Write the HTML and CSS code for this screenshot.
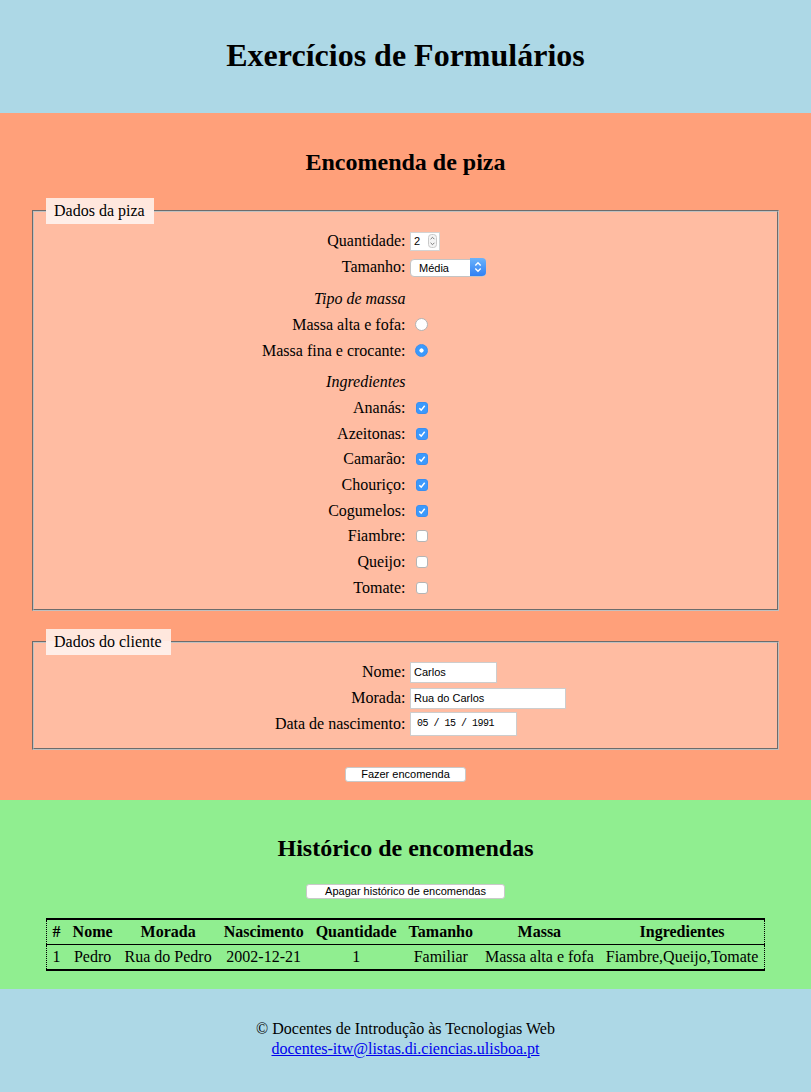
FILE: index.html
```html
<!DOCTYPE html>
<html lang="pt">
<head>
<meta charset="utf-8">
<title>Exercícios de Formulários</title>
<link rel="stylesheet" href="styles.css">
</head>
<body>
<header class="top">
  <h1 class="title">Exercícios de Formulários</h1>
</header>

<section class="order">
  <h2 class="sec-title">Encomenda de piza</h2>
  <form class="order-form">
    <fieldset class="box box-piza">
      <legend class="box-legend">Dados da piza</legend>
      <div class="row">
        <label class="lbl" for="qtd">Quantidade:</label>
        <div class="ctl">
          <span class="num-wrap">
            <input class="num" id="qtd" type="number" value="2">
            <svg class="spin" width="9" height="14" viewBox="0 0 9 14"><rect x="0.5" y="0.5" width="8" height="13" rx="3" fill="#f4f4f4" stroke="#c9c9c9"/><path d="M2.6 5.2 L4.5 3.3 L6.4 5.2" fill="none" stroke="#7a7a7a" stroke-width="1"/><path d="M2.6 8.8 L4.5 10.7 L6.4 8.8" fill="none" stroke="#7a7a7a" stroke-width="1"/></svg>
          </span>
        </div>
      </div>
      <div class="row">
        <label class="lbl" for="tam">Tamanho:</label>
        <div class="ctl">
          <span class="sel-wrap">
            <select class="sel" id="tam"><option>Pequena</option><option selected>Média</option><option>Familiar</option></select>
            <span class="sel-btn"><svg width="16" height="18" viewBox="0 0 16 18"><path d="M5.3 7.4 L8 4.8 L10.7 7.4" fill="none" stroke="#fff" stroke-width="1.4"/><path d="M5.3 10.6 L8 13.2 L10.7 10.6" fill="none" stroke="#fff" stroke-width="1.4"/></svg></span>
          </span>
        </div>
      </div>
      <div class="row head-row"><span class="lbl sub">Tipo de massa</span></div>
      <div class="row">
        <label class="lbl" for="m1">Massa alta e fofa:</label>
        <div class="ctl"><input class="radio" type="radio" name="massa" id="m1"></div>
      </div>
      <div class="row">
        <label class="lbl" for="m2">Massa fina e crocante:</label>
        <div class="ctl"><input class="radio" type="radio" name="massa" id="m2" checked></div>
      </div>
      <div class="row head-row head-ing"><span class="lbl sub">Ingredientes</span></div>
      <div class="row">
        <label class="lbl" for="i1">Ananás:</label>
        <div class="ctl"><input class="check" type="checkbox" id="i1" checked></div>
      </div>
      <div class="row">
        <label class="lbl" for="i2">Azeitonas:</label>
        <div class="ctl"><input class="check" type="checkbox" id="i2" checked></div>
      </div>
      <div class="row">
        <label class="lbl" for="i3">Camarão:</label>
        <div class="ctl"><input class="check" type="checkbox" id="i3" checked></div>
      </div>
      <div class="row">
        <label class="lbl" for="i4">Chouriço:</label>
        <div class="ctl"><input class="check" type="checkbox" id="i4" checked></div>
      </div>
      <div class="row">
        <label class="lbl" for="i5">Cogumelos:</label>
        <div class="ctl"><input class="check" type="checkbox" id="i5" checked></div>
      </div>
      <div class="row">
        <label class="lbl" for="i6">Fiambre:</label>
        <div class="ctl"><input class="check" type="checkbox" id="i6"></div>
      </div>
      <div class="row">
        <label class="lbl" for="i7">Queijo:</label>
        <div class="ctl"><input class="check" type="checkbox" id="i7"></div>
      </div>
      <div class="row">
        <label class="lbl" for="i8">Tomate:</label>
        <div class="ctl"><input class="check" type="checkbox" id="i8"></div>
      </div>
    </fieldset>

    <fieldset class="box box-cliente">
      <legend class="box-legend">Dados do cliente</legend>
      <div class="row">
        <label class="lbl" for="nome">Nome:</label>
        <div class="ctl"><input class="txt txt-nome" id="nome" type="text" value="Carlos"></div>
      </div>
      <div class="row">
        <label class="lbl" for="morada">Morada:</label>
        <div class="ctl"><input class="txt txt-morada" id="morada" type="text" value="Rua do Carlos"></div>
      </div>
      <div class="row">
        <label class="lbl" for="nasc">Data de nascimento:</label>
        <div class="ctl"><input class="txt txt-date" id="nasc" type="text" value="05 / 15 / 1991"></div>
      </div>
    </fieldset>

    <div class="btn-line"><button class="btn btn-order" type="button">Fazer encomenda</button></div>
  </form>
</section>

<section class="history">
  <h2 class="sec-title">Histórico de encomendas</h2>
  <div class="btn-line"><button class="btn btn-clear" type="button">Apagar histórico de encomendas</button></div>
  <table class="hist-table">
    <thead>
      <tr><th>#</th><th>Nome</th><th>Morada</th><th>Nascimento</th><th>Quantidade</th><th>Tamanho</th><th>Massa</th><th>Ingredientes</th></tr>
    </thead>
    <tbody>
      <tr><td>1</td><td>Pedro</td><td>Rua do Pedro</td><td>2002-12-21</td><td>1</td><td>Familiar</td><td>Massa alta e fofa</td><td>Fiambre,Queijo,Tomate</td></tr>
    </tbody>
  </table>
</section>

<footer class="foot">
  <div class="foot-line">© Docentes de Introdução às Tecnologias Web</div>
  <div class="foot-line"><a class="foot-link" href="mailto:docentes-itw@listas.di.ciencias.ulisboa.pt">docentes-itw@listas.di.ciencias.ulisboa.pt</a></div>
</footer>
</body>
</html>
```

FILE: styles.css
```css
html, body {
  margin: 0;
  padding: 0;
}
body {
  font-family: "Liberation Serif", "Times New Roman", serif;
  font-size: 16px;
  color: #000;
  background: #add8e6;
}

.top {
  background: #add8e6;
  padding: 37px 0 39px;
  text-align: center;
}
.title {
  margin: 0;
  font-size: 32px;
  font-weight: bold;
  line-height: 37px;
}

.order {
  background: #ffa07a;
  padding: 35px 30px 18px;
}
.sec-title {
  margin: 0 0 22px;
  font-size: 24px;
  font-weight: bold;
  line-height: 28px;
  text-align: center;
}

.order-form {
  margin: 0;
}

.box {
  margin: 0 2px 18px;
  padding: 4px 12px 8px;
  border: 2px groove #c0c0c0;
  background: rgba(255, 255, 255, 0.3);
}
.box-cliente {
  margin-bottom: 17px;
  padding-top: 5px;
  padding-bottom: 11px;
}
.box-legend {
  background: rgba(255, 255, 255, 0.75);
  padding: 4px 9px 4px 8px;
  line-height: 18px;
}

.row {
  display: grid;
  grid-template-columns: 1fr 1fr;
  align-items: center;
  height: 25.7px;
}
.head-row {
  margin-top: 7px;
}
.head-ing {
  margin-top: 6px;
}
.lbl {
  text-align: right;
}
.sub {
  font-style: italic;
}
.ctl {
  display: flex;
  align-items: center;
  padding-left: 4.5px;
}

.num-wrap, .sel-wrap {
  position: relative;
  display: inline-block;
  height: 19px;
}
.num {
  box-sizing: border-box;
  width: 30px;
  height: 19px;
  margin: 0;
  padding: 0 0 0 3px;
  border: 1px solid #d3d3d3;
  background: #fff;
  font-family: "Liberation Sans", Arial, sans-serif;
  font-size: 11px;
  -moz-appearance: textfield;
}
.num::-webkit-inner-spin-button,
.num::-webkit-outer-spin-button {
  -webkit-appearance: none;
  margin: 0;
}
.spin {
  position: absolute;
  right: 3px;
  top: 2.5px;
}

.sel-wrap {
  height: 18px;
}
.sel {
  -webkit-appearance: none;
  appearance: none;
  box-sizing: border-box;
  width: 76px;
  height: 18px;
  margin: 0;
  padding: 0 0 0 8px;
  border: 1px solid #c4c4c4;
  border-radius: 4px;
  background: #fff;
  font-family: "Liberation Sans", Arial, sans-serif;
  font-size: 11px;
  color: #000;
}
.sel-btn {
  position: absolute;
  right: 0;
  top: 0;
  width: 16px;
  height: 18px;
  border-radius: 0 4px 4px 0;
  background: linear-gradient(#6cb3fa, #2f80f5);
  pointer-events: none;
}
.sel-btn svg {
  display: block;
}

.radio {
  -webkit-appearance: none;
  appearance: none;
  box-sizing: border-box;
  width: 13px;
  height: 13px;
  margin: 0 0 0 5px;
  border: 1px solid #b3b3b3;
  border-radius: 50%;
  background: #fff;
}
.radio:checked {
  border-color: #3a8ff0;
  background: radial-gradient(circle, #fff 0 1.8px, #3b99fc 2.4px);
}

.check {
  -webkit-appearance: none;
  appearance: none;
  box-sizing: border-box;
  width: 12px;
  height: 12px;
  margin: 0 0 0 5.5px;
  border: 1px solid #b5b5b5;
  border-radius: 3px;
  background: #fff;
}
.check:checked {
  border-color: #3a8ff0;
  background: #3b99fc url("data:image/svg+xml,%3Csvg xmlns='http://www.w3.org/2000/svg' width='10' height='10' viewBox='0 0 10 10'%3E%3Cpath d='M2.3 5.2 L4.2 7.1 L7.7 2.8' fill='none' stroke='white' stroke-width='1.5'/%3E%3C/svg%3E") center/10px 10px no-repeat;
}

.txt {
  box-sizing: border-box;
  height: 21px;
  margin: 0;
  padding: 0 0 0 3px;
  border: 1px solid #cdcdcd;
  background: #fff;
  font-family: "Liberation Sans", Arial, sans-serif;
  font-size: 11px;
  color: #000;
}
.txt-nome {
  width: 87px;
}
.txt-morada {
  width: 156px;
}
.txt-date {
  width: 107px;
  height: 24px;
  padding-left: 6px;
  font-family: "Liberation Mono", "Courier New", monospace;
  font-size: 10px;
  letter-spacing: -0.5px;
}

.btn-line {
  display: flex;
  justify-content: center;
}
.btn {
  height: 15px;
  margin: 0;
  padding: 0 16px;
  border: 1px solid #c9c9c9;
  border-radius: 3px;
  background: #fff;
  font-family: "Liberation Sans", Arial, sans-serif;
  font-size: 11px;
  line-height: 13px;
  color: #000;
}
.btn-order {
  padding: 0 15.5px;
}
.btn-clear {
  padding: 0 18px;
}

.history {
  background: #90ee90;
  padding: 34px 30px 18px;
}
.history .btn-line {
  margin-bottom: 19px;
}
.hist-table {
  margin: 0 auto;
  border-collapse: collapse;
  border-top: 2px solid #000;
  border-bottom: 2px solid #000;
  border-left: 1px dotted #000;
  border-right: 1px dotted #000;
}
.hist-table th,
.hist-table td {
  padding: 3px 6px;
  text-align: center;
  line-height: 18px;
  white-space: nowrap;
}
.hist-table thead tr {
  border-bottom: 1px solid #000;
}

.foot {
  background: #add8e6;
  padding: 30px 0 33px;
  text-align: center;
}
.foot-line {
  line-height: 20px;
}
.foot-link {
  color: #0000ee;
}
```
